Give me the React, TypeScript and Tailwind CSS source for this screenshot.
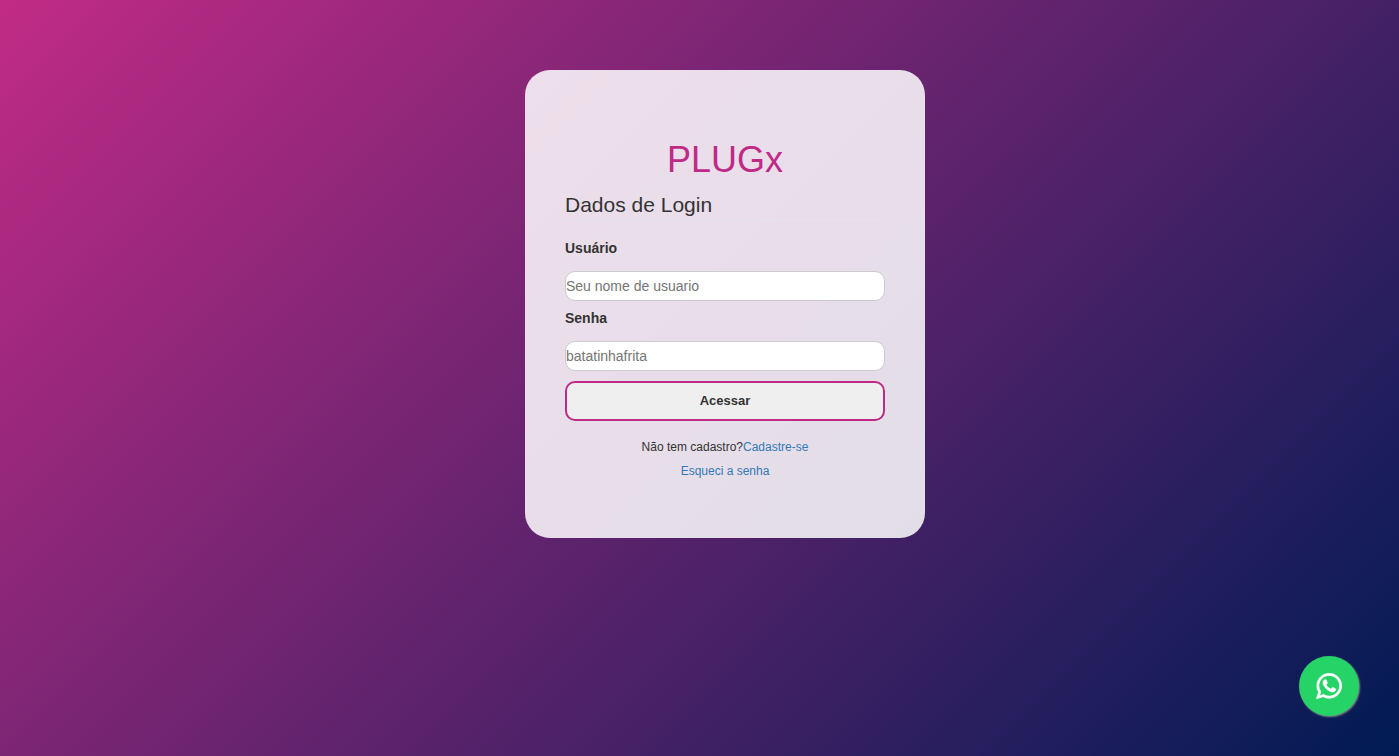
import React from "react";

type FieldProps = {
  id: string;
  label: string;
  placeholder: string;
  type: string;
};

function Field({ id, label, placeholder, type }: FieldProps) {
  return (
    <div className="mb-[7px] flex flex-col">
      <label htmlFor={id} className="mb-[13px] text-sm leading-5 font-bold">
        {label}
      </label>
      <input
        id={id}
        name={id}
        type={type}
        placeholder={placeholder}
        className="h-[30px] w-full rounded-[10px] border border-[#cccccc] bg-white text-sm placeholder:text-[#757575]"
      />
    </div>
  );
}

function WhatsAppIcon() {
  return (
    <svg
      viewBox="108 102 1576 1576"
      className="size-[26px]"
      fill="currentColor"
      stroke="currentColor"
      strokeWidth="40"
      aria-hidden="true"
    >
      <path d="M1113 974q13 0 97.5 44t89.5 53q2 5 2 15 0 33-17 76-16 39-71 65.5t-102 26.5q-57 0-190-62-98-45-170-118t-148-185q-72-107-71-194v-8q3-91 74-158 24-22 52-22 6 0 18 1.5t19 1.5q19 0 26.5 6.5t15.5 27.5q8 20 33 88t25 75q0 21-34.5 57.5t-34.5 46.5q0 7 5 15 34 73 102 137 56 53 151 101 12 7 22 7 15 0 54-48.5t52-48.5zm-203 530q127 0 243.5-50t200.5-134 134-200.5 50-243.5-50-243.5-134-200.5-200.5-134-243.5-50-243.5 50-200.5 134-134 200.5-50 243.5q0 203 120 368l-79 233 242-77q158 104 345 104zm0-1382q153 0 292.5 60t240.5 161 161 240.5 60 292.5-60 292.5-161 240.5-240.5 161-292.5 60q-195 0-365-94l-417 134 136-405q-108-178-108-389 0-153 60-292.5t161-240.5 240.5-161 292.5-60z" />
    </svg>
  );
}

export default function App() {
  return (
    <main className="flex min-h-screen items-start justify-center bg-linear-[135deg,#c12b86,#001b54] pt-[70px] pb-10 pl-[51px] font-['Liberation_Sans',Arial,sans-serif] text-[#333333]">
      <form
        className="flex w-full max-w-[400px] flex-col rounded-[25px] bg-white/85 px-10 pt-[70px] pb-[55px]"
        onSubmit={(e) => e.preventDefault()}
      >
        <h1 className="text-center text-4xl leading-10 text-[#bf2a86]">PLUGx</h1>
        <h2 className="mt-2.5 mb-[17px] border-b border-[#e5e5e5] text-[21px] leading-[30px]">
          Dados de Login
        </h2>
        <Field id="usuario" label="Usuário" placeholder="Seu nome de usuario" type="text" />
        <Field id="senha" label="Senha" placeholder="batatinhafrita" type="password" />
        <button
          type="submit"
          className="mt-[3px] h-10 w-full cursor-pointer rounded-[10px] border-2 border-[#bf2a86] bg-[#efefef] text-[13px] font-bold"
        >
          Acessar
        </button>
        <div className="mt-3.5 text-center text-xs leading-6">
          <p>
            Não tem cadastro?
            <a href="#cadastro" className="text-[#337ab7]">
              Cadastre-se
            </a>
          </p>
          <p>
            <a href="#senha" className="text-[#337ab7]">
              Esqueci a senha
            </a>
          </p>
        </div>
      </form>
      <a
        href="#whatsapp"
        aria-label="WhatsApp"
        className="fixed right-10 bottom-10 flex size-[60px] items-center justify-center rounded-full bg-[#25d366] text-white shadow-[1px_1px_2px_#888888]"
      >
        <WhatsAppIcon />
      </a>
    </main>
  );
}
